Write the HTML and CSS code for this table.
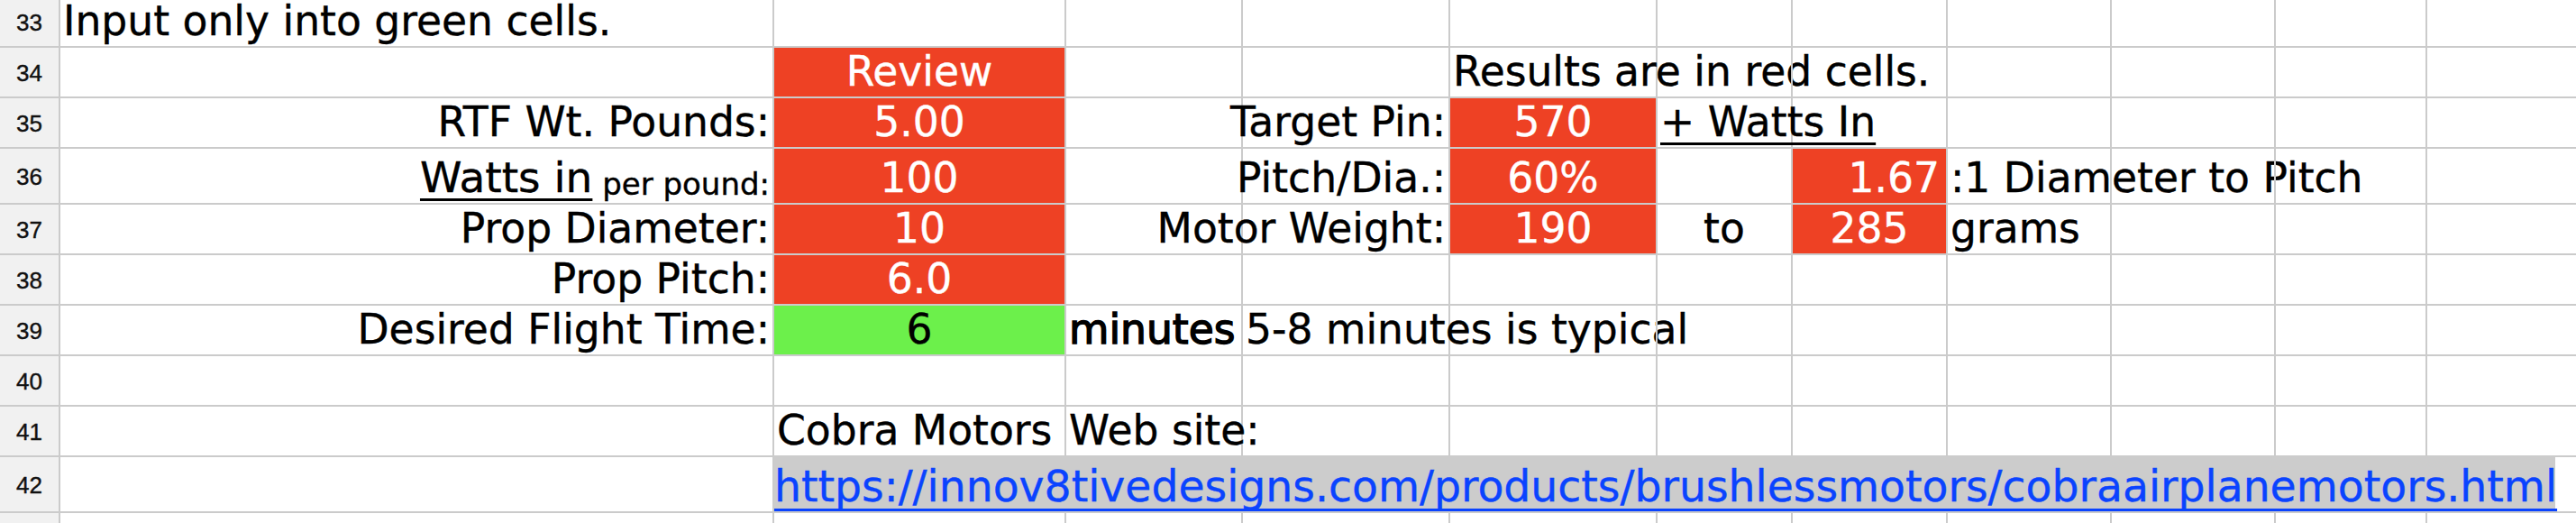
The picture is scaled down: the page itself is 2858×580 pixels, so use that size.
FILE: index.html
```html
<!DOCTYPE html>
<html>
<head>
<meta charset="utf-8">
<link rel="stylesheet" href="styles.css">
</head>
<body>
<div class="sheet">
  <!-- row 33 -->
  <div class="c rh">33</div>
  <div class="c">Input only into green cells.</div>
  <div class="c"></div><div class="c"></div><div class="c"></div><div class="c"></div><div class="c"></div><div class="c"></div><div class="c"></div><div class="c"></div><div class="c"></div><div class="c"></div>
  <!-- row 34 -->
  <div class="c rh">34</div>
  <div class="c"></div>
  <div class="c red m">Review</div>
  <div class="c"></div><div class="c"></div>
  <div class="c">Results are in red cells.</div>
  <div class="c"></div><div class="c"></div><div class="c"></div><div class="c"></div><div class="c"></div><div class="c"></div>
  <!-- row 35 -->
  <div class="c rh">35</div>
  <div class="c r">RTF Wt. Pounds:</div>
  <div class="c red m">5.00</div>
  <div class="c"></div>
  <div class="c r">Target Pin:</div>
  <div class="c red m">570</div>
  <div class="c"><span class="u">+ Watts In</span></div>
  <div class="c"></div><div class="c"></div><div class="c"></div><div class="c"></div><div class="c"></div>
  <!-- row 36 -->
  <div class="c rh">36</div>
  <div class="c r"><span class="u big">Watts in</span><span class="small">&nbsp;per pound:</span></div>
  <div class="c red m">100</div>
  <div class="c"></div>
  <div class="c r">Pitch/Dia.:</div>
  <div class="c red m">60%</div>
  <div class="c"></div>
  <div class="c red r pr">1.67</div>
  <div class="c">:1 Diameter to Pitch</div>
  <div class="c"></div><div class="c"></div><div class="c"></div>
  <!-- row 37 -->
  <div class="c rh">37</div>
  <div class="c r">Prop Diameter:</div>
  <div class="c red m">10</div>
  <div class="c"></div>
  <div class="c r">Motor Weight:</div>
  <div class="c red m">190</div>
  <div class="c m">to</div>
  <div class="c red m">285</div>
  <div class="c">grams</div>
  <div class="c"></div><div class="c"></div><div class="c"></div>
  <!-- row 38 -->
  <div class="c rh">38</div>
  <div class="c r">Prop Pitch:</div>
  <div class="c red m">6.0</div>
  <div class="c"></div><div class="c"></div><div class="c"></div><div class="c"></div><div class="c"></div><div class="c"></div><div class="c"></div><div class="c"></div><div class="c"></div>
  <!-- row 39 -->
  <div class="c rh">39</div>
  <div class="c r">Desired Flight Time:</div>
  <div class="c green m">6</div>
  <div class="c"><span class="b">minutes</span></div>
  <div class="c">5-8 minutes is typical</div>
  <div class="c"></div><div class="c"></div><div class="c"></div><div class="c"></div><div class="c"></div><div class="c"></div><div class="c"></div>
  <!-- row 40 -->
  <div class="c rh">40</div>
  <div class="c"></div><div class="c"></div><div class="c"></div><div class="c"></div><div class="c"></div><div class="c"></div><div class="c"></div><div class="c"></div><div class="c"></div><div class="c"></div><div class="c"></div>
  <!-- row 41 -->
  <div class="c rh">41</div>
  <div class="c"></div>
  <div class="c">Cobra Motors</div>
  <div class="c">Web site:</div>
  <div class="c"></div><div class="c"></div><div class="c"></div><div class="c"></div><div class="c"></div><div class="c"></div><div class="c"></div><div class="c"></div>
  <!-- row 42 -->
  <div class="c rh">42</div>
  <div class="c"></div>
  <div class="c link"><div class="linkbox"><a class="url" href="#">https://innov8tivedesigns.com/products/brushlessmotors/cobraairplanemotors.html</a></div></div>
  <!-- row 43 (only its top edge is in view) -->
  <div class="c rh"></div>
  <div class="c"></div><div class="c"></div><div class="c"></div><div class="c"></div><div class="c"></div><div class="c"></div><div class="c"></div><div class="c"></div><div class="c"></div><div class="c"></div><div class="c"></div>
</div>
</body>
</html>
```

FILE: styles.css
```css
html, body {
  margin: 0;
  padding: 0;
  background: #ffffff;
}
body {
  width: 2858px;
  height: 580px;
  overflow: hidden;
  font-family: "DejaVu Sans", Verdana, sans-serif;
}
.sheet {
  display: grid;
  grid-template-columns: 67px 792px 324px 196px 230px 230px 150px 172px 182px 182px 168px 200px;
  grid-template-rows: 56px 56px 56px 62px 56px 56px 56px 56px 56px 62px 56px;
  margin-top: -3px;
}
.c {
  box-sizing: border-box;
  min-width: 0;
  border-right: 2px solid #cbcbcb;
  border-bottom: 2px solid #cbcbcb;
  display: flex;
  align-items: flex-end;
  padding: 0 3px 1px 3px;
  font-size: 45.6px;
  line-height: normal;
  white-space: nowrap;
  color: #000000;
  -webkit-text-stroke: 0.4px currentColor;
}
.r { justify-content: flex-end; }
.m { justify-content: center; }
.pr { padding-right: 7px; }
.red { background: #ee4124; color: #ffffff; }
.green { background: #6cf04b; color: #000000; }
.rh {
  background: #f1f1f1;
  font-family: "Liberation Sans", Arial, sans-serif;
  font-size: 26px;
  align-items: center;
  justify-content: center;
  padding: 2px 0 0 0;
  color: #111111;
}
.u {
  text-decoration: underline;
  text-decoration-thickness: 3px;
  text-underline-offset: 7px;
  text-decoration-skip-ink: none;
}
.big { font-size: 47px; }
.small { font-size: 34px; }
.b { -webkit-text-stroke: 1.4px #000000; }
.link {
  grid-column: 3 / -1;
  display: block;
  padding: 0;
  border-right: none;
}
.linkbox {
  width: 1976px;
  height: 63px;
  margin-top: -1px;
  background: #cccccc;
  display: flex;
  align-items: flex-end;
  padding: 0 0 2px 0;
  box-sizing: border-box;
}
.url {
  color: #0a43ff;
  font-size: 47.3px;
  line-height: normal;
  white-space: nowrap;
  text-decoration: underline;
  text-decoration-thickness: 3px;
  text-underline-offset: 8px;
  text-decoration-skip-ink: none;
}
```
